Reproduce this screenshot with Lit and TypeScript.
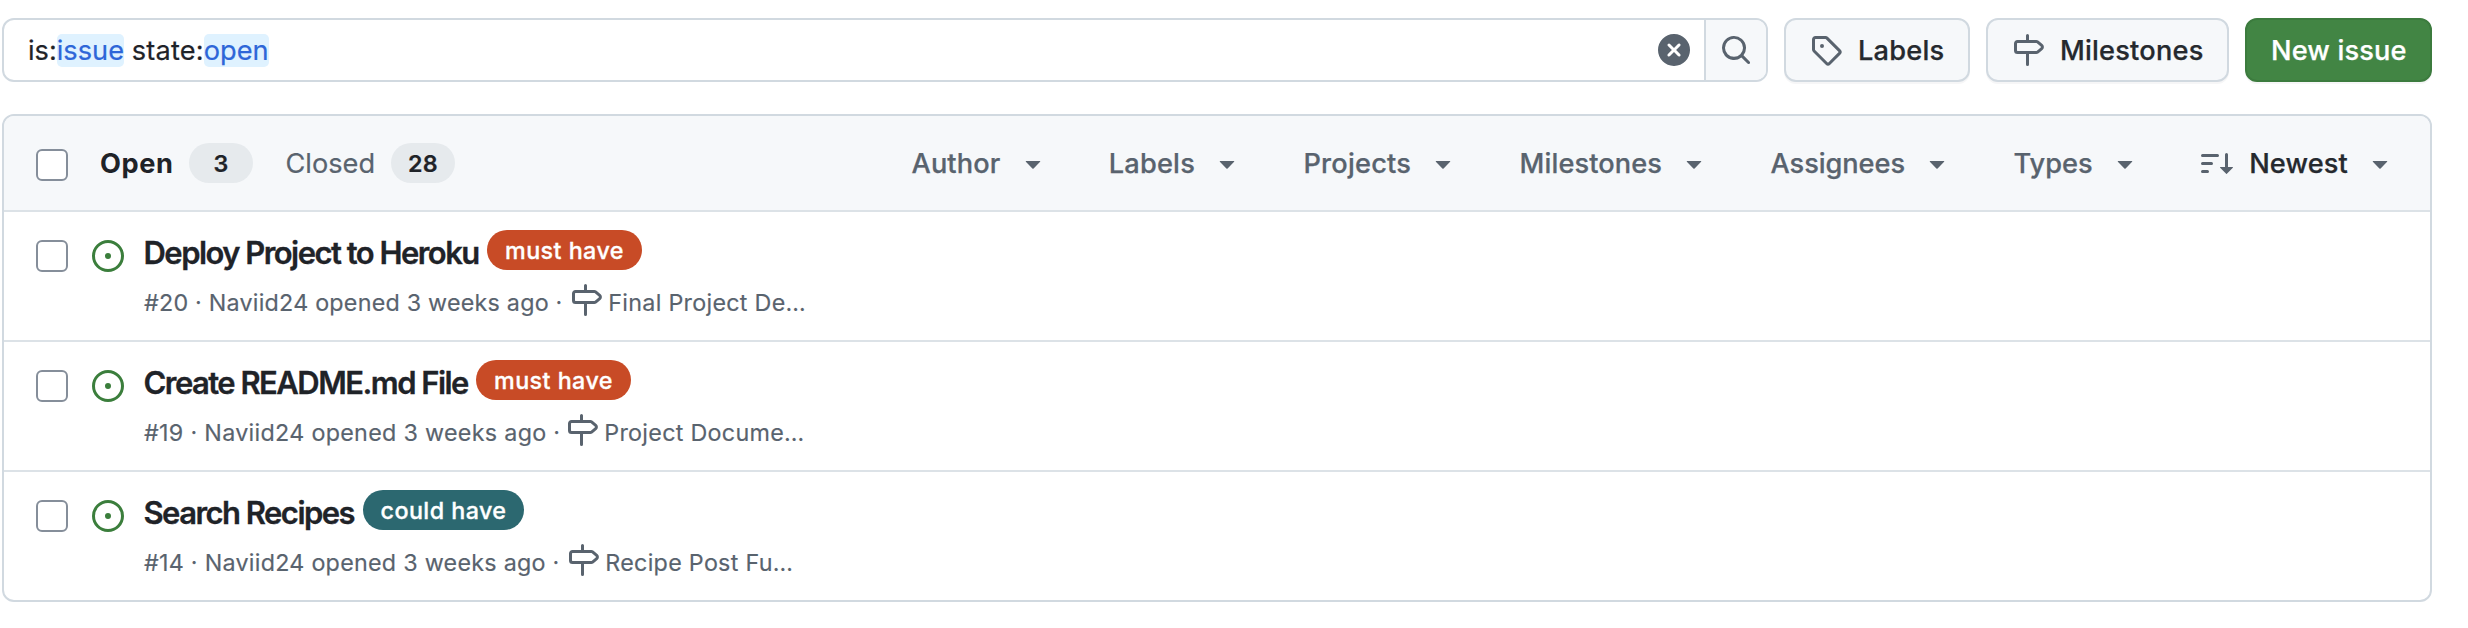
import { LitElement, html, css } from "lit";
import { customElement, property } from "lit/decorators.js";
import { styleMap } from "lit/directives/style-map.js";

const ICONS: Record<string, string> = {
  search:
    "M10.68 11.74a6 6 0 0 1-7.922-8.982 6 6 0 0 1 8.982 7.922l3.04 3.04a.749.749 0 0 1-.326 1.275.749.749 0 0 1-.734-.215ZM11.5 7a4.499 4.499 0 1 0-8.997 0A4.499 4.499 0 0 0 11.5 7Z",
  clear:
    "M2.343 13.657A8 8 0 1 1 13.658 2.343 8 8 0 0 1 2.343 13.657ZM6.03 4.97a.751.751 0 0 0-1.042.018.751.751 0 0 0-.018 1.042L6.94 8 4.97 9.97a.749.749 0 0 0 .326 1.275.749.749 0 0 0 .734-.215L8 9.06l1.97 1.97a.749.749 0 0 0 1.275-.326.749.749 0 0 0-.215-.734L9.06 8l1.97-1.97a.749.749 0 0 0-.326-1.275.749.749 0 0 0-.734.215L8 6.94Z",
  tag: "M1 7.775V2.75C1 1.784 1.784 1 2.75 1h5.025c.464 0 .91.184 1.238.513l6.25 6.25a1.75 1.75 0 0 1 0 2.474l-5.026 5.026a1.75 1.75 0 0 1-2.474 0l-6.25-6.25A1.752 1.752 0 0 1 1 7.775Zm1.5 0c0 .066.026.13.073.177l6.25 6.25a.25.25 0 0 0 .354 0l5.025-5.025a.25.25 0 0 0 0-.354l-6.25-6.25a.25.25 0 0 0-.177-.073H2.75a.25.25 0 0 0-.25.25ZM6 5a1 1 0 1 1 0 2 1 1 0 0 1 0-2Z",
  milestone:
    "M7.75 0a.75.75 0 0 1 .75.75V3h3.634c.414 0 .814.147 1.13.414l2.07 1.75a1.75 1.75 0 0 1 0 2.672l-2.07 1.75a1.75 1.75 0 0 1-1.13.414H8.5v5.25a.75.75 0 0 1-1.5 0V10H2.75A1.75 1.75 0 0 1 1 8.25v-3.5C1 3.784 1.784 3 2.75 3H7V.75A.75.75 0 0 1 7.75 0Zm4.384 8.5a.25.25 0 0 0 .161-.06l2.07-1.75a.248.248 0 0 0 0-.38l-2.07-1.75a.25.25 0 0 0-.161-.06H2.75a.25.25 0 0 0-.25.25v3.5c0 .138.112.25.25.25h9.384Z",
  caret:
    "m4.427 7.427 3.396 3.396a.25.25 0 0 0 .354 0l3.396-3.396A.25.25 0 0 0 11.396 7H4.604a.25.25 0 0 0-.177.427Z",
  sort: "M0 4.25a.75.75 0 0 1 .75-.75h7.5a.75.75 0 0 1 0 1.5H.75A.75.75 0 0 1 0 4.25Zm0 4a.75.75 0 0 1 .75-.75h4.5a.75.75 0 0 1 0 1.5H.75A.75.75 0 0 1 0 8.25Zm0 4a.75.75 0 0 1 .75-.75h2.5a.75.75 0 0 1 0 1.5H.75a.75.75 0 0 1-.75-.75ZM13.5 10h2.25a.25.25 0 0 1 .177.427l-3 3a.25.25 0 0 1-.354 0l-3-3A.25.25 0 0 1 9.75 10H12V3.75a.75.75 0 0 1 1.5 0V10Z",
  open: "M8 9.5a1.5 1.5 0 1 0 0-3 1.5 1.5 0 0 0 0 3ZM8 0a8 8 0 1 1 0 16A8 8 0 0 1 8 0ZM1.5 8a6.5 6.5 0 1 0 13 0 6.5 6.5 0 0 0-13 0Z",
};

interface Issue {
  number: number;
  title: string;
  titleWidth: number;
  label: string;
  tone: "must" | "could";
  labelWidth: number;
  bylineWidth: number;
  bylineTracking: number;
  milestone: string;
}

interface Filter {
  name: string;
  tracking: number;
}

const FILTERS: Filter[] = [
  { name: "Author", tracking: 0.1 },
  { name: "Labels", tracking: 0.2 },
  { name: "Projects", tracking: 0.22 },
  { name: "Milestones", tracking: 0.1 },
  { name: "Assignees", tracking: -0.06 },
  { name: "Types", tracking: 0.05 },
];

const ISSUES: Issue[] = [
  { number: 20, title: "Deploy Project to Heroku", titleWidth: 344, label: "must have", tone: "must", labelWidth: 155, bylineWidth: 426, bylineTracking: 0.22, milestone: "Final Project De…" },
  { number: 19, title: "Create README.md File", titleWidth: 333, label: "must have", tone: "must", labelWidth: 155, bylineWidth: 422, bylineTracking: 0.3, milestone: "Project Docume…" },
  { number: 14, title: "Search Recipes", titleWidth: 220, label: "could have", tone: "could", labelWidth: 161, bylineWidth: 423, bylineTracking: 0.26, milestone: "Recipe Post Fu…" },
];

@customElement("oct-icon")
export class OctIcon extends LitElement {
  @property() name = "";

  static styles = css`
    :host {
      display: block;
      flex: none;
      width: 32px;
      height: 32px;
    }
    svg {
      display: block;
      fill: currentColor;
    }
  `;

  render() {
    return html`<svg width="32" height="32" viewBox="0 0 16 16"><path d=${ICONS[this.name]}></path></svg>`;
  }
}

@customElement("issue-row")
export class IssueRow extends LitElement {
  @property({ attribute: false }) issue!: Issue;

  static styles = css`
    :host {
      display: block;
    }
    .row {
      display: flex;
      height: 128px;
      padding-left: 32px;
      white-space: nowrap;
    }
    .check {
      box-sizing: border-box;
      flex: none;
      width: 32px;
      height: 32px;
      margin-top: 28px;
      border: 2px solid #858e9a;
      border-radius: 6px;
      background: #fff;
    }
    .state {
      margin: 28px 19px 0 24px;
      color: #3b7e3c;
    }
    .title-line {
      display: flex;
      align-items: center;
      height: 40px;
      margin-top: 18px;
    }
    .title {
      box-sizing: border-box;
      padding: 5px 0 0 0.5px;
      font-size: 31px;
      line-height: 40px;
      font-weight: 600;
      letter-spacing: -1.54px;
      -webkit-text-stroke: 0.3px currentColor;
      color: #1f2328;
    }
    .label {
      height: 40px;
      border-radius: 20px;
      font-size: 23.3px;
      line-height: 41.5px;
      font-weight: 500;
      letter-spacing: 0.45px;
      text-align: center;
      -webkit-text-stroke: 0.3px currentColor;
      color: #fff;
    }
    .must {
      background: #c84b26;
    }
    .could {
      background: #2c6870;
    }
    .meta {
      display: flex;
      height: 32px;
      margin: 14px 0 0 1px;
      font-size: 23.3px;
      line-height: 37px;
      -webkit-text-stroke: 0.15px currentColor;
      color: #59636e;
    }
    .milestone {
      margin-left: 6.3px;
      letter-spacing: 0.28px;
    }
  `;

  render() {
    const i = this.issue;
    return html`<div class="row">
      <span class="check" role="checkbox"></span>
      <oct-icon class="state" name="open"></oct-icon>
      <div>
        <div class="title-line">
          <span class="title" style=${styleMap({ width: `${i.titleWidth}px` })}>${i.title}</span>
          <span class="label ${i.tone}" style=${styleMap({ width: `${i.labelWidth}px` })}>${i.label}</span>
        </div>
        <div class="meta">
          <span style=${styleMap({ width: `${i.bylineWidth}px`, letterSpacing: `${i.bylineTracking}px` })}
            >#${i.number} · Naviid24 opened 3 weeks ago ·</span
          >
          <oct-icon name="milestone"></oct-icon>
          <span class="milestone">${i.milestone}</span>
        </div>
      </div>
    </div>`;
  }
}

@customElement("app-root")
export class AppRoot extends LitElement {
  static styles = css`
    :host {
      display: block;
      box-sizing: border-box;
      height: 628px;
      padding: 18px 36px 0 2px;
      background: #fff;
      font-family: Inter, "Liberation Sans", sans-serif;
      font-size: 27.2px;
      color: #1f2328;
      white-space: nowrap;
    }
    .toolbar {
      display: flex;
      gap: 16px;
      height: 64px;
      margin-bottom: 32px;
    }
    .search,
    .button {
      box-sizing: border-box;
      display: flex;
      align-items: center;
      border: 2px solid #d1d9e0;
      border-radius: 12px;
    }
    .search {
      width: 1766px;
      overflow: hidden;
    }
    .query {
      flex: 1;
      padding-left: 24px;
      line-height: 33px;
      white-space: pre;
      -webkit-text-stroke: 0.2px currentColor;
    }
    .value {
      display: inline-block;
      border-radius: 5px;
      background: #dff2ff;
      color: #2e66d8;
    }
    .state-key {
      letter-spacing: 0.2px;
    }
    .clear {
      margin-right: 14px;
      color: #59636e;
    }
    .go {
      display: flex;
      align-items: center;
      justify-content: center;
      width: 60px;
      height: 60px;
      border-left: 2px solid #d1d9e0;
      background: #f6f8fa;
      color: #59636e;
    }
    .button {
      gap: 16px;
      padding-left: 24px;
      background: #f6f8fa;
      box-shadow: 0 2px 0 rgba(31, 35, 40, 0.04);
      font-weight: 500;
      letter-spacing: 0.2px;
      -webkit-text-stroke: 0.25px currentColor;
      color: #25292e;
    }
    .button oct-icon {
      color: #59636e;
    }
    .labels {
      width: 186px;
    }
    .milestones {
      width: 243px;
    }
    .new {
      width: 187px;
      border-color: #3c7b3e;
      background: #428544;
      letter-spacing: 0.14px;
      color: #fff;
    }
    .list {
      box-sizing: border-box;
      height: 488px;
      border: 2px solid #d1d9e0;
      border-radius: 12px;
      overflow: hidden;
    }
    .head {
      display: flex;
      align-items: center;
      height: 94px;
      padding: 0 34px 0 32px;
      background: #f6f8fa;
      color: #59636e;
    }
    .check {
      box-sizing: border-box;
      width: 32px;
      height: 32px;
      margin: 4px 32px 0 0;
      border: 2px solid #858e9a;
      border-radius: 6px;
      background: #fff;
    }
    .tab {
      width: 89px;
    }
    .tab.active {
      font-weight: 700;
      letter-spacing: 0.6px;
      color: #1f2328;
    }
    .tab.closed {
      width: 105.5px;
      margin-left: 32.5px;
      -webkit-text-stroke: 0.2px currentColor;
    }
    .count {
      width: 64px;
      height: 40px;
      border-radius: 20px;
      background: #e6eaed;
      font-size: 23.3px;
      line-height: 41px;
      font-weight: 600;
      letter-spacing: 0.4px;
      text-align: center;
      -webkit-text-stroke: 0.2px currentColor;
      color: #1f2328;
    }
    .filters {
      display: flex;
      gap: 60.1px;
      margin-left: auto;
      font-weight: 500;
      -webkit-text-stroke: 0.25px currentColor;
    }
    .filter {
      display: flex;
      align-items: center;
      gap: 16.3px;
    }
    .newest {
      gap: 16px;
      color: #25292e;
      letter-spacing: 0.13px;
    }
    .newest oct-icon {
      color: #59636e;
    }
    issue-row,
    .head {
      border-bottom: 2px solid #dce2e7;
    }
    issue-row:last-child {
      border-bottom: none;
    }
  `;

  render() {
    return html`
      <div class="toolbar">
        <div class="search">
          <div class="query">is:<span class="value">issue</span> <span class="state-key">state:</span><span class="value">open</span></div>
          <oct-icon class="clear" name="clear"></oct-icon>
          <div class="go"><oct-icon name="search"></oct-icon></div>
        </div>
        <div class="button labels"><oct-icon name="tag"></oct-icon>Labels</div>
        <div class="button milestones"><oct-icon name="milestone"></oct-icon>Milestones</div>
        <div class="button new">New issue</div>
      </div>
      <div class="list">
        <div class="head">
          <span class="check" role="checkbox"></span>
          <span class="tab active">Open</span>
          <span class="count">3</span>
          <span class="tab closed">Closed</span>
          <span class="count">28</span>
          <div class="filters">
            ${FILTERS.map(
              (f) => html`<div class="filter">
                <span style=${styleMap({ letterSpacing: `${f.tracking}px` })}>${f.name}</span>
                <oct-icon name="caret"></oct-icon>
              </div>`
            )}
            <div class="filter newest">
              <oct-icon name="sort"></oct-icon>
              <span>Newest</span>
              <oct-icon name="caret"></oct-icon>
            </div>
          </div>
        </div>
        ${ISSUES.map((issue) => html`<issue-row .issue=${issue}></issue-row>`)}
      </div>
    `;
  }
}
